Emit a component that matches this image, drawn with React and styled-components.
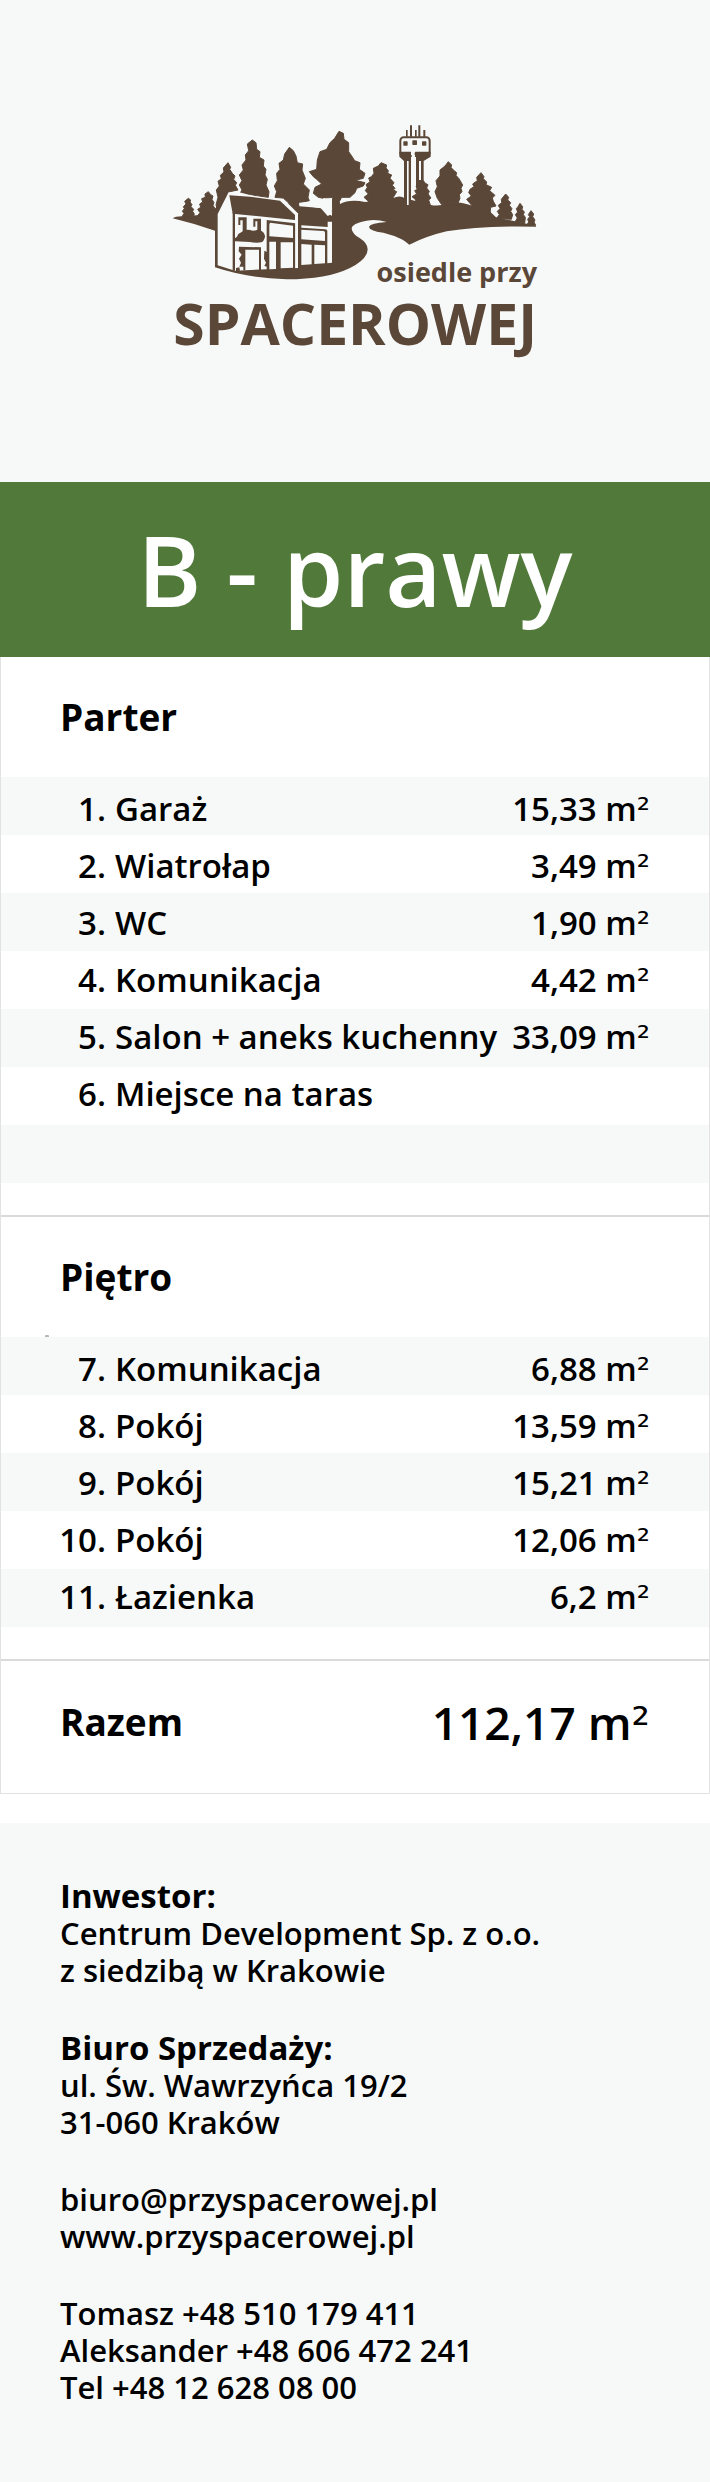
import React from "react";
import styled, { createGlobalStyle } from "styled-components";

const BROWN = "#5a4738";
const MIST = "#f7f9f8";
const LINE = "#dadada";

const GlobalStyle = createGlobalStyle`
  * { box-sizing: border-box; }
  body {
    margin: 0;
    background: #fff;
    color: #000;
    font-family: "Open Sans", "Noto Sans", sans-serif;
    font-weight: 600;
  }
`;

const Page = styled.main`
  width: 100%;
`;

const Header = styled.header`
  display: flex;
  justify-content: center;
  padding: 120px 24px 102px;
  background: ${MIST};
`;

const LogoSvg = styled.svg`
  display: block;
  width: 370px;
  max-width: 100%;
  height: auto;
`;

const LogoText = styled.text`
  font-family: "Open Sans", sans-serif;
  font-weight: 700;
  font-size: ${(p) => p.$size}px;
  fill: ${BROWN};
  text-anchor: end;
`;

const Card = styled.section`
  border: 1px solid #e2e2e2;
  border-top: 0;
`;

const Title = styled.h1`
  margin: 0 -1px;
  padding: 22px 24px;
  background: #517a3a;
  color: #fff;
  font-size: 97px;
  line-height: 131px;
  font-weight: 600;
  text-align: center;
`;

const Floor = styled.section`
  padding-bottom: 32px;
  border-bottom: 2px solid ${LINE};
`;

const FloorHeading = styled.h2`
  margin: 0;
  padding: 36px 59px;
  font-size: 37px;
  line-height: 48px;
  font-weight: 700;
`;

const Stripes = styled.div`
  position: relative;
  min-height: ${(p) => p.$bands * 58}px;
  padding-top: 3px;
  background: repeating-linear-gradient(${MIST} 0 58px, #fff 58px 116px);
`;

const Speck = styled.span`
  position: absolute;
  top: -2px;
  left: 44px;
  width: 4px;
  height: 2px;
  border-radius: 1px 1px 0 0;
  background: #b5b5b5;
`;

const RoomTable = styled.table`
  width: 100%;
  border-collapse: collapse;
  font-size: 33px;
  line-height: 57px;
  white-space: nowrap;
`;

const NumberCell = styled.td`
  width: 105px;
  padding: 0;
  text-align: right;
`;

const NameCell = styled.th`
  padding: 0 0 0 9px;
  font-weight: 600;
  text-align: left;
`;

const AreaCell = styled.td`
  padding: 0 59px 0 0;
  text-align: right;
`;

const Square = styled.span`
  font-family: "DejaVu Sans", sans-serif;
  font-weight: 400;
  line-height: 1;
`;

const Total = styled.div`
  display: flex;
  justify-content: space-between;
  align-items: center;
  padding: 30px 59px 40px;
`;

const TotalLabel = styled.h2`
  margin: 0;
  font-size: 37px;
  line-height: 62px;
  font-weight: 700;
`;

const TotalValue = styled.span`
  font-size: 46px;
  line-height: 62px;
`;

const Contact = styled.footer`
  display: flex;
  flex-direction: column;
  gap: 40px;
  margin-top: 29px;
  padding: 54px 60px 76px;
  background: ${MIST};
  font-size: 31px;
  line-height: 37px;
`;

const Group = styled.address`
  display: flex;
  flex-direction: column;
  align-items: flex-start;
  font-style: normal;
`;

const GroupHeading = styled.h3`
  margin: 0;
  font-size: 33px;
  line-height: 38px;
  font-weight: 700;
`;

const ContactLink = styled.a`
  color: inherit;
  text-decoration: none;
`;

const TREES = [
  "85,265 92,270 90,276 96,284 93,290 101,298 98,304 103,312 100,320 66,320 72,310 67,304 73,296 70,290 78,282 74,274",
  "145,245 152,254 159,258 156,268 162,278 159,286 165,296 173,300 165,320 112,318 120,308 113,298 122,292 119,282 128,276 125,266 136,262 135,252",
  "204,158 212,172 209,178 217,190 225,198 221,208 230,218 226,226 234,240 205,246 190,270 173,300 168,285 174,262 169,240 178,228 174,214 184,206 181,196 192,186 190,174",
  "277,90 288,98 290,118 300,125 298,142 312,150 310,168 318,178 315,195 322,208 318,225 327,245 325,262 240,250 246,240 238,225 246,212 238,195 250,180 246,165 258,150 256,135 266,122 262,102",
  "388,112 400,122 408,138 412,158 428,162 426,180 436,205 430,222 448,240 444,262 448,272 418,278 410,300 370,265 345,262 350,245 343,228 352,212 350,190 360,178 357,160 370,150 374,132",
  "537,64 550,70 552,88 566,98 566,125 575,138 584,152 600,158 598,178 615,190 610,205 586,211 615,218 610,228 590,235 585,248 570,262 545,262 538,275 540,300 516,318 518,262 490,265 475,262 460,250 465,232 485,222 470,208 460,200 448,185 470,178 472,150 480,125 500,118 510,98 524,85",
  "663,158 680,165 678,174 685,182 683,190 695,195 690,205 702,218 697,226 705,235 700,240 710,245 700,262 700,280 630,278 612,262 625,252 616,242 622,232 618,224 630,215 626,204 634,200 642,190 640,175 655,168",
  "790,212 796,220 804,224 800,234 808,244 804,252 813,264 806,270 812,288 760,286 768,270 756,260 770,252 764,242 772,238 768,228 780,224",
  "865,155 875,165 873,172 880,180 890,188 888,196 897,206 908,225 903,235 906,245 898,254 900,265 892,284 845,284 832,265 825,245 832,230 828,212 840,198 840,180 855,168",
  "963,188 972,200 970,206 980,216 978,224 995,232 989,242 1005,256 997,264 1000,274 1008,288 992,292 990,312 940,292 920,268 934,258 926,248 930,238 942,230 938,222 952,212 950,202",
  "1037,252 1046,262 1043,270 1052,278 1048,286 1056,296 1052,304 1058,314 1054,328 1010,325 1018,314 1012,304 1020,296 1015,286 1025,278 1024,268",
  "1080,280 1088,290 1086,298 1093,306 1090,314 1096,322 1094,340 1065,336 1072,324 1066,314 1073,306 1069,296 1074,290",
  "1113,302 1121,312 1118,320 1125,330 1122,336 1127,346 1100,346 1106,336 1103,328 1109,320 1105,314",
];

const Logo = () => (
  <LogoSvg viewBox="0 0 370 260" role="img" aria-label="Osiedle przy Spacerowej">
    <g transform="translate(-10 -10) scale(0.33333)" fill={BROWN}>
      <path d="M38 325Q45 319 66 319L165 312V296L200 250L516 300V315L540 282Q570 266 615 276L700 264Q720 254 735 265L812 285Q840 290 860 280Q890 270 940 288L985 300L1008 322L1128 347V350Q960 346 860 364Q800 378 748 404Q735 393 725 388Q700 375 670 368Q627 362 627 350Q632 339 680 336Q650 327 620 332Q575 340 575 356Q577 372 600 385Q623 400 623 418Q622 448 570 474Q500 508 380 508Q260 504 165 472V362Q100 340 38 325Z" />
      {TREES.map((points) => (
        <polygon key={points} points={points} stroke={BROWN} strokeWidth="3" strokeLinejoin="round" />
      ))}

      {/* water tower */}
      <path d="M168 60h5v20h-5zM180 46h6v34h-6zM195 60h5v20h-5zM205 46h6v34h-6zM220 60h6v20h-6z" transform="translate(570 0)" />
      <rect x="721" y="82" width="88" height="56" rx="10" fill={MIST} stroke={BROWN} strokeWidth="6" />
      <path d="M721 125H753V285H732V153L718 140V125ZM766 125H812V140L791 153V235H768V140L763 132Z" />
      <path d="M741 153H746V285H741ZM777 153H783V210H777ZM755 134H765V225L755 250Z" fill={MIST} />
      <rect x="730" y="94" width="13" height="13" rx="2" />
      <rect x="757" y="91" width="14" height="14" rx="2" />
      <rect x="786" y="94" width="13" height="13" rx="2" />

      {/* house walls */}
      <path d="M173 312L205 248L238 247L272 256L315 264L370 266L415 311V474L225 482L173 466Z" fill={MIST} />
      <path d="M418 278L448 277L490 284L516 312L503 318L482 294L418 289Z" fill={MIST} />
      <path d="M490 264L515 268L516 318L484 294Z" fill={MIST} />
      <path d="M208 256L270 260L360 272L405 315V330L218 311Z" />
      <path d="M218 308H225V482H218ZM414 312H422V474H414Z" />

      {/* upper windows and balcony flowers */}
      <path d="M235 322H260V364H248V331H241V345H235ZM280 326H303V366H292V334H286V350H280Z" />
      <path d="M225 394V384Q230 384 235 372Q245 366 250 362Q260 358 270 360Q280 364 290 360Q300 358 306 364Q316 370 315 380Q312 394 304 397Q290 400 270 396Z" />

      {/* entrance */}
      <path d="M237 410L303 412V480H297V419H256V481H250V470H238L243 458L237 446L245 434L236 424Z" />
      <path d="M313 422L321 426V470L313 468L318 458L312 446Z" />
      <path d="M228 474L238 472L240 482L228 484Z" />

      {/* large glazing */}
      <path d="M320 330L406 340V476L320 480Z" />
      <path d="M330 338L399 347V384L328 379V344ZM328 395H348V477L328 478ZM362 397H399V473L362 475Z" fill={MIST} />
      <path d="M406 318H414V474H406Z" fill={MIST} />
      <path d="M424 346L503 351V335H516V458L502 460V362Q500 358 495 358L424 353ZM424 359L490 363Q495 364 495 368V393L424 388ZM424 402L455 404V463L424 465ZM463 404L495 406V460L463 462Z" fill={MIST} />
    </g>
    <LogoText x="367" y="162" $size={27}>osiedle przy</LogoText>
    <LogoText x="367" y="225" $size={57}>SPACEROWEJ</LogoText>
  </LogoSvg>
);

const GROUND_FLOOR = [
  [1, "Garaż", "15,33"],
  [2, "Wiatrołap", "3,49"],
  [3, "WC", "1,90"],
  [4, "Komunikacja", "4,42"],
  [5, "Salon + aneks kuchenny", "33,09"],
  [6, "Miejsce na taras", null],
];

const UPPER_FLOOR = [
  [7, "Komunikacja", "6,88"],
  [8, "Pokój", "13,59"],
  [9, "Pokój", "15,21"],
  [10, "Pokój", "12,06"],
  [11, "Łazienka", "6,2"],
];

const Area = ({ value }) => (
  <>
    {value} m<Square>²</Square>
  </>
);

const Rooms = ({ id, title, rooms, bands, speck }) => (
  <Floor>
    <FloorHeading id={id}>{title}</FloorHeading>
    <Stripes $bands={bands}>
      {speck && <Speck />}
      <RoomTable aria-labelledby={id}>
        <tbody>
          {rooms.map(([number, name, area]) => (
            <tr key={number}>
              <NumberCell>{number}.</NumberCell>
              <NameCell scope="row">{name}</NameCell>
              <AreaCell>{area && <Area value={area} />}</AreaCell>
            </tr>
          ))}
        </tbody>
      </RoomTable>
    </Stripes>
  </Floor>
);

export default function App() {
  return (
    <Page>
      <GlobalStyle />
      <Header>
        <Logo />
      </Header>
      <Card>
        <Title>B - prawy</Title>
        <Rooms id="parter" title="Parter" rooms={GROUND_FLOOR} bands={7} />
        <Rooms id="pietro" title="Piętro" rooms={UPPER_FLOOR} bands={5} speck />
        <Total>
          <TotalLabel>Razem</TotalLabel>
          <TotalValue>
            <Area value="112,17" />
          </TotalValue>
        </Total>
      </Card>
      <Contact>
        <Group>
          <GroupHeading>Inwestor:</GroupHeading>
          <span>Centrum Development Sp. z o.o.</span>
          <span>z siedzibą w Krakowie</span>
        </Group>
        <Group>
          <GroupHeading>Biuro Sprzedaży:</GroupHeading>
          <span>ul. Św. Wawrzyńca 19/2</span>
          <span>31-060 Kraków</span>
        </Group>
        <Group>
          <ContactLink href="mailto:biuro@przyspacerowej.pl">biuro@przyspacerowej.pl</ContactLink>
          <ContactLink href="http://www.przyspacerowej.pl">www.przyspacerowej.pl</ContactLink>
        </Group>
        <Group>
          <ContactLink href="tel:+48510179411">Tomasz +48 510 179 411</ContactLink>
          <ContactLink href="tel:+48606472241">Aleksander +48 606 472 241</ContactLink>
          <ContactLink href="tel:+48126280800">Tel +48 12 628 08 00</ContactLink>
        </Group>
      </Contact>
    </Page>
  );
}
